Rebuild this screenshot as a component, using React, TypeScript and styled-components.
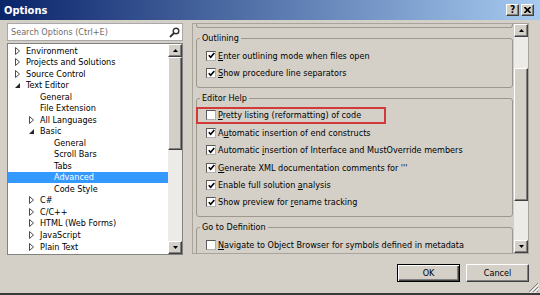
import React from "react";
import styled, { createGlobalStyle, css } from "styled-components";

const GlobalStyle = createGlobalStyle`
  html, body {
    margin: 0;
    padding: 0;
    background: #d4d0c8;
  }
  body {
    font-family: "DejaVu Sans Condensed", "DejaVu Sans", sans-serif;
    font-size: 9px;
    color: #000;
  }
`;

const raised = css`
  box-sizing: border-box;
  background: #d4d0c8;
  border: 1px solid;
  border-color: #ffffff #404040 #404040 #ffffff;
  box-shadow: inset -1px -1px 0 #808080;
`;

const Window = styled.div`
  position: relative;
  width: 540px;
  height: 295px;
  box-sizing: border-box;
  display: flex;
  flex-direction: column;
  background: #d4d0c8;
  border-bottom: 2px solid #3a3a3a;
  overflow: hidden;
`;

const TitleBar = styled.div`
  flex: none;
  height: 20px;
  display: flex;
  align-items: center;
  gap: 2px;
  padding: 0 6px 0 4px;
  background: linear-gradient(90deg, #0a246a 0%, #a6caf0 100%);
`;

const Title = styled.span`
  flex: 1;
  color: #fff;
  font-weight: bold;
  font-size: 11px;
`;

const CaptionButton = styled.div`
  ${raised};
  width: 13px;
  height: 12px;
  display: flex;
  align-items: center;
  justify-content: center;
  font-weight: bold;
  font-size: 10px;
  line-height: 10px;
`;

const Body = styled.div`
  flex: none;
  height: 235px;
  display: flex;
  gap: 9px;
  padding: 3px 11px 0 7px;
  box-sizing: border-box;
`;

const LeftPane = styled.div`
  width: 176px;
  display: flex;
  flex-direction: column;
  gap: 2px;
`;

const SearchBox = styled.div`
  flex: none;
  height: 18px;
  box-sizing: border-box;
  display: flex;
  align-items: center;
  padding: 0 2px 0 3px;
  background: #fff;
  border: 1px solid #a9a9a9;
`;

const SearchInput = styled.input`
  flex: 1;
  min-width: 0;
  border: none;
  outline: none;
  padding: 0;
  background: transparent;
  font: inherit;
  &::placeholder {
    color: #6d6d6d;
  }
`;

const TreeFrame = styled.div`
  flex: 1;
  display: flex;
  min-height: 0;
  background: #fff;
  border: 1px solid #828282;
`;

const TreeList = styled.ul`
  flex: 1;
  margin: 0;
  padding: 1px 0 0;
  list-style: none;
  overflow: hidden;
`;

const TreeRow = styled.li<{ $level: number; $selected?: boolean }>`
  height: 11.53px;
  display: flex;
  align-items: center;
  white-space: nowrap;
  padding-left: ${(p) => 4 + p.$level * 14}px;
  background: ${(p) => (p.$selected ? "#3399ff" : "transparent")};
  color: ${(p) => (p.$selected ? "#fff" : "#000")};
`;

const Expander = styled.span`
  flex: none;
  width: 14px;
  padding-left: 3px;
  box-sizing: border-box;
  display: flex;
  align-items: center;
`;

const ScrollBar = styled.div`
  flex: none;
  width: 14px;
  display: flex;
  flex-direction: column;
  background: #ecebe7;
`;

const ScrollButton = styled.div`
  ${raised};
  flex: none;
  height: 13px;
  display: flex;
  align-items: center;
  justify-content: center;
`;

const ScrollTrack = styled.div`
  flex: 1;
  display: flex;
  flex-direction: column;
`;

const Thumb = styled.div<{ $top: number; $height: number }>`
  ${raised};
  flex: none;
  margin-top: ${(p) => p.$top}px;
  height: ${(p) => p.$height}px;
`;

const SettingsPane = styled.div`
  flex: 1;
  height: 231px;
  display: flex;
  box-sizing: border-box;
  border: 1px solid #a8a49c;
`;

const PageContent = styled.div`
  flex: 1;
  min-width: 0;
  overflow: hidden;
  display: flex;
  flex-direction: column;
  gap: 5px;
  padding: 0 1px 0 3px;
`;

const GroupTail = styled.div`
  flex: none;
  height: 4px;
  box-sizing: border-box;
  border: 1px solid #9c9890;
  border-top: none;
  border-radius: 0 0 3px 3px;
`;

const Group = styled.fieldset`
  flex: none;
  margin: 0;
  min-width: 0;
  padding: 3px 0 5px;
  border: 1px solid #9c9890;
  border-radius: 3px;
`;

const Legend = styled.legend`
  margin-left: 3px;
  padding: 0 2px;
  line-height: 11px;
`;

const CheckRow = styled.label<{ $marked?: boolean }>`
  height: 17.4px;
  display: flex;
  align-items: center;
  gap: 2px;
  padding-left: 9px;
  white-space: nowrap;
  box-sizing: border-box;
  ${(p) =>
    p.$marked &&
    css`
      width: 190px;
      margin-left: -1px;
      padding-left: 10px;
      box-shadow: inset 0 0 0 2px #d23a3a;
    `}
`;

const Box = styled.span`
  flex: none;
  width: 10px;
  height: 10px;
  box-sizing: border-box;
  display: flex;
  align-items: center;
  justify-content: center;
  background: #fff;
  border: 1px solid;
  border-color: #5a5a5a #b0b0b0 #b0b0b0 #5a5a5a;
`;

const Footer = styled.div`
  display: flex;
  justify-content: flex-end;
  gap: 6px;
  padding: 9px 11px 0;
`;

const DialogButton = styled.button<{ $default?: boolean }>`
  ${raised};
  width: 63px;
  height: 18px;
  padding: 0;
  font: inherit;
  color: #000;
  ${(p) =>
    p.$default &&
    css`
      border-color: #000;
      box-shadow: inset 1px 1px 0 #fff, inset -1px -1px 0 #404040,
        inset -2px -2px 0 #808080;
    `}
`;

const Grip = styled.svg`
  position: absolute;
  right: 1px;
  bottom: 0;
`;

type TreeItem = {
  label: string;
  level: number;
  expander?: "open" | "closed";
  selected?: boolean;
};

const treeItems: TreeItem[] = [
  { label: "Environment", level: 0, expander: "closed" },
  { label: "Projects and Solutions", level: 0, expander: "closed" },
  { label: "Source Control", level: 0, expander: "closed" },
  { label: "Text Editor", level: 0, expander: "open" },
  { label: "General", level: 1 },
  { label: "File Extension", level: 1 },
  { label: "All Languages", level: 1, expander: "closed" },
  { label: "Basic", level: 1, expander: "open" },
  { label: "General", level: 2 },
  { label: "Scroll Bars", level: 2 },
  { label: "Tabs", level: 2 },
  { label: "Advanced", level: 2, selected: true },
  { label: "Code Style", level: 2 },
  { label: "C#", level: 1, expander: "closed" },
  { label: "C/C++", level: 1, expander: "closed" },
  { label: "HTML (Web Forms)", level: 1, expander: "closed" },
  { label: "JavaScript", level: 1, expander: "closed" },
  { label: "Plain Text", level: 1, expander: "closed" },
];

type Option = { text: string; checked: boolean; marked?: boolean };

const groups: { title: string; options: Option[] }[] = [
  {
    title: "Outlining",
    options: [
      { text: "&Enter outlining mode when files open", checked: true },
      { text: "&Show procedure line separators", checked: true },
    ],
  },
  {
    title: "Editor Help",
    options: [
      { text: "&Pretty listing (reformatting) of code", checked: false, marked: true },
      { text: "A&utomatic insertion of end constructs", checked: true },
      { text: "Automatic &insertion of Interface and MustOverride members", checked: true },
      { text: "&Generate XML documentation comments for '''", checked: true },
      { text: "Enable full solution &analysis", checked: true },
      { text: "Show preview for &rename tracking", checked: true },
    ],
  },
  {
    title: "Go to Definition",
    options: [
      { text: "&Navigate to Object Browser for symbols defined in metadata", checked: false },
    ],
  },
];

function AccessText({ text }: { text: string }) {
  const i = text.indexOf("&");
  if (i < 0) return <span>{text}</span>;
  return (
    <span>
      {text.slice(0, i)}
      <u>{text[i + 1]}</u>
      {text.slice(i + 2)}
    </span>
  );
}

function Arrow({ open }: { open: boolean }) {
  return open ? (
    <svg width="5" height="5" viewBox="0 0 5 5">
      <path d="M5 0 L5 5 L0 5 Z" fill="#262626" />
    </svg>
  ) : (
    <svg width="5" height="8" viewBox="0 0 5 8">
      <path d="M0.5 0.5 L4.5 4 L0.5 7.5 Z" fill="#fff" stroke="#4a4a4a" strokeWidth="1" />
    </svg>
  );
}

function Scroller({ top, height }: { top: number; height: number }) {
  return (
    <ScrollBar>
      <ScrollButton>
        <svg width="5" height="3" viewBox="0 0 5 3">
          <path d="M2.5 0 L5 3 L0 3 Z" fill="#000" />
        </svg>
      </ScrollButton>
      <ScrollTrack>
        <Thumb $top={top} $height={height} />
      </ScrollTrack>
      <ScrollButton>
        <svg width="5" height="3" viewBox="0 0 5 3">
          <path d="M0 0 L5 0 L2.5 3 Z" fill="#000" />
        </svg>
      </ScrollButton>
    </ScrollBar>
  );
}

function Check({ checked }: { checked: boolean }) {
  return (
    <Box>
      {checked && (
        <svg width="7" height="7" viewBox="0 0 7 7">
          <path d="M0.8 3.2 L2.7 5.3 L6.3 1" fill="none" stroke="#000" strokeWidth="1.6" />
        </svg>
      )}
    </Box>
  );
}

export default function App() {
  return (
    <>
      <GlobalStyle />
      <Window>
        <TitleBar>
          <Title>Options</Title>
          <CaptionButton>?</CaptionButton>
          <CaptionButton>
            <svg width="7" height="6" viewBox="0 0 7 6">
              <path d="M0.5 0 L6.5 6 M6.5 0 L0.5 6" stroke="#000" strokeWidth="1.6" />
            </svg>
          </CaptionButton>
        </TitleBar>
        <Body>
          <LeftPane>
            <SearchBox>
              <SearchInput placeholder="Search Options (Ctrl+E)" />
              <svg width="11" height="11" viewBox="0 0 11 11">
                <circle cx="7" cy="4" r="2.8" fill="none" stroke="#333" strokeWidth="1.4" />
                <path d="M5 6 L1 10" stroke="#333" strokeWidth="1.8" />
              </svg>
            </SearchBox>
            <TreeFrame>
              <TreeList>
                {treeItems.map((item, i) => (
                  <TreeRow key={i} $level={item.level} $selected={item.selected}>
                    <Expander>
                      {item.expander && <Arrow open={item.expander === "open"} />}
                    </Expander>
                    {item.label}
                  </TreeRow>
                ))}
              </TreeList>
              <Scroller top={0} height={93} />
            </TreeFrame>
          </LeftPane>
          <SettingsPane>
            <PageContent>
              <GroupTail />
              {groups.map((g) => (
                <Group key={g.title}>
                  <Legend>{g.title}</Legend>
                  {g.options.map((o) => (
                    <CheckRow key={o.text} $marked={o.marked}>
                      <Check checked={o.checked} />
                      <AccessText text={o.text} />
                    </CheckRow>
                  ))}
                </Group>
              ))}
            </PageContent>
            <Scroller top={31} height={133} />
          </SettingsPane>
        </Body>
        <Footer>
          <DialogButton $default>OK</DialogButton>
          <DialogButton>Cancel</DialogButton>
        </Footer>
        <Grip width="11" height="11" viewBox="0 0 11 11">
          <path d="M10 1 L1 10 M10 5 L5 10 M10 9 L9 10" stroke="#808080" strokeWidth="1" />
          <path d="M11 2 L2 11 M11 6 L6 11" stroke="#fff" strokeWidth="1" />
        </Grip>
      </Window>
    </>
  );
}
